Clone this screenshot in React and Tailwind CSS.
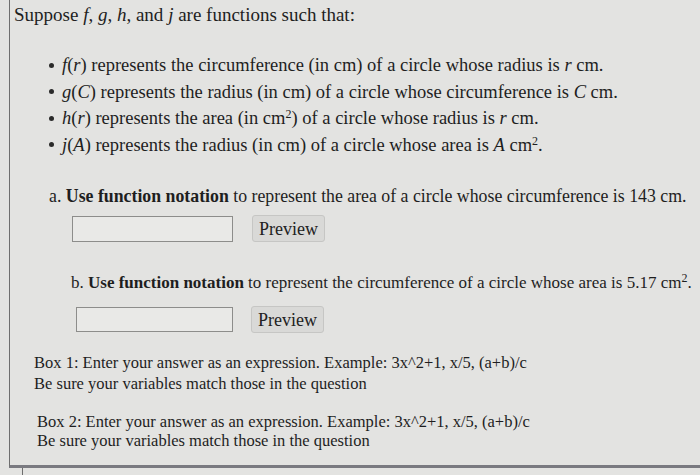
import React from 'react';

const serif = "font-['Liberation_Serif','Times_New_Roman',serif]";

function V({ children }) {
  return <i className="italic">{children}</i>;
}

function Sq() {
  return <sup className="text-[12px]">2</sup>;
}

function AnswerRow({ pad, inputW, inputH, gap, mt }) {
  return (
    <div className={`flex items-center ${pad} ${mt}`}>
      <div className={`${inputW} ${inputH} border border-[#8d8d8b] bg-[#e9e9e7]`} />
      <button
        className={`${gap} h-[27px] w-[73px] rounded-[3px] border border-[#c6c6c4] bg-[#d9d9d7] text-[18px] leading-none text-[#222]`}
      >
        Preview
      </button>
    </div>
  );
}

const facts = [
  [<><V>f</V>(<V>r</V>)</>, <> represents the circumference (in cm) of a circle whose radius is <V>r</V> cm.</>],
  [<><V>g</V>(<V>C</V>)</>, <> represents the radius (in cm) of a circle whose circumference is <V>C</V> cm.</>],
  [<><V>h</V>(<V>r</V>)</>, <> represents the area (in cm<Sq />) of a circle whose radius is <V>r</V> cm.</>],
  [<><V>j</V>(<V>A</V>)</>, <> represents the radius (in cm) of a circle whose area is <V>A</V> cm<Sq />.</>],
];

export default function App() {
  return (
    <div className={`w-[700px] h-[475px] overflow-hidden bg-[#e3e3e1] text-[#1e1e1e] text-[17px] ${serif}`}>
      <div className="ml-[9px] h-[468px] border-l border-b-[3px] border-l-[#6e6e6e] border-b-[#7a7a80]">
        <p className="pl-[4px] pt-[2px] text-[19px] leading-[25px]">
          Suppose <V>f</V>, <V>g</V>, <V>h</V>, and <V>j</V> are functions such that:
        </p>

        <ul className="mt-[25px] pl-[39px] text-[18.5px]">
          {facts.map(([fn, rest], i) => (
            <li key={i} className="flex items-center leading-[26.5px]">
              <span className="mr-[8px] h-[5px] w-[5px] rounded-full bg-[#2a2a2a]" />
              <span>
                {fn}
                {rest}
              </span>
            </li>
          ))}
        </ul>

        <p className="mt-[26px] pl-[39px] text-[17.8px] leading-[24px]">
          a. <b className="font-bold">Use function notation</b> to represent the area of a circle whose circumference is 143 cm.
        </p>
        <AnswerRow pad="pl-[62px]" inputW="w-[161px]" inputH="h-[26px]" gap="ml-[19px]" mt="mt-[7px]" />

        <p className="mt-[29px] pl-[61px] leading-[24px]">
          b. <b className="font-bold">Use function notation</b> to represent the circumference of a circle whose area is 5.17 cm<Sq />.
        </p>
        <AnswerRow pad="pl-[66px]" inputW="w-[157px]" inputH="h-[25px]" gap="ml-[18px]" mt="mt-[11px]" />

        <div className="mt-[19px] pl-[24px] text-[16.5px] leading-[21px]">
          <p>Box 1: Enter your answer as an expression. Example: 3x^2+1, x/5, (a+b)/c</p>
          <p>Be sure your variables match those in the question</p>
        </div>

        <div className="mt-[18px] pl-[27px] text-[16.5px] leading-[19px]">
          <p>Box 2: Enter your answer as an expression. Example: 3x^2+1, x/5, (a+b)/c</p>
          <p>Be sure your variables match those in the question</p>
        </div>
      </div>
      <div className="ml-[22px] h-[7px] border-l border-[#6e6e6e]" />
    </div>
  );
}
